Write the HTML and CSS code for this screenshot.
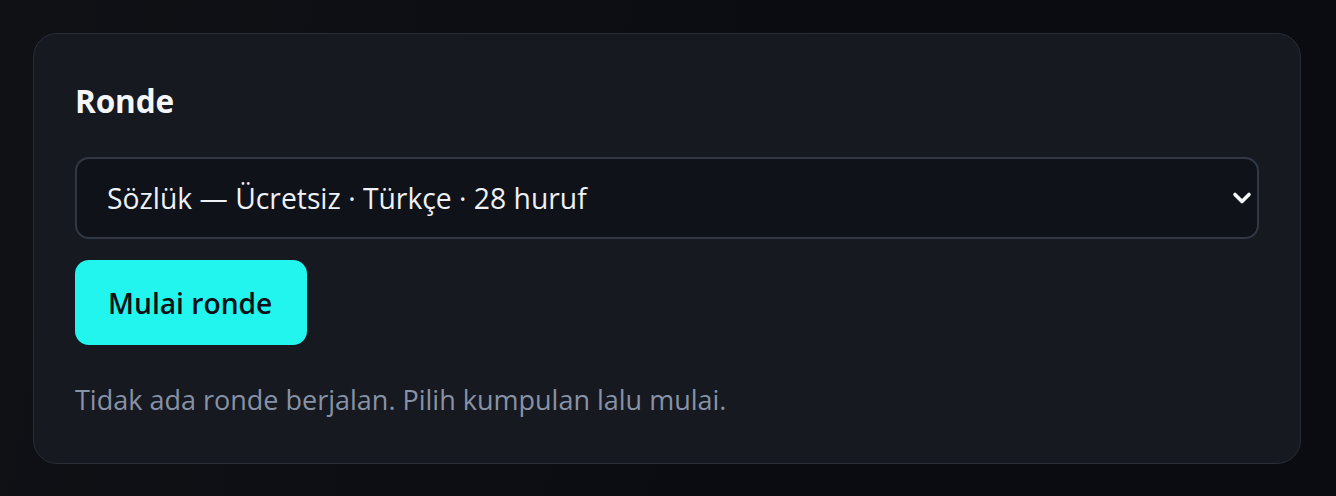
FILE: index.html
```html
<!DOCTYPE html>
<html lang="id">
<head>
<meta charset="utf-8">
<title>Ronde</title>
<link rel="stylesheet" href="styles.css">
</head>
<body>
<main class="page">
  <section class="card">
    <h2 class="card-title">Ronde</h2>
    <div class="select-wrap">
      <select class="select">
        <option>Sözlük — Ücretsiz · Türkçe · 28 huruf</option>
      </select>
      <svg class="chevron" width="20" height="14" viewBox="0 0 20 14" aria-hidden="true">
        <polyline points="3,3.5 10,10.5 17,3.5" fill="none" stroke="#f4f6fa" stroke-width="3.6" stroke-linecap="round" stroke-linejoin="round"/>
      </svg>
    </div>
    <div class="actions">
      <button class="btn-primary" type="button">Mulai ronde</button>
    </div>
    <p class="status">Tidak ada ronde berjalan. Pilih kumpulan lalu mulai.</p>
  </section>
</main>
</body>
</html>
```
FILE: styles.css
```css
* { box-sizing: border-box; }

html, body {
  margin: 0;
  height: 100%;
}

body {
  background: linear-gradient(100deg, #0f1115 0%, #0b0c11 60%, #0b0c12 100%);
  font-family: "Open Sans", "Noto Sans", sans-serif;
  color: #eef1f5;
}

.page {
  padding: 33px 35px 33px 33px;
}

.card {
  background: #161920;
  border: 1px solid #282d37;
  border-radius: 24px;
  padding: 48px 41px 45px 41px;
  display: flex;
  flex-direction: column;
}

.card-title {
  margin: 0;
  font-size: 31.5px;
  line-height: 38px;
  font-weight: 700;
  color: #f4f6fa;
  letter-spacing: -0.1px;
}

.select-wrap {
  position: relative;
  margin-top: 37px;
}

.select {
  appearance: none;
  -webkit-appearance: none;
  width: 100%;
  height: 82px;
  margin: 0;
  padding: 0 60px 0 30px;
  background: #0f1218;
  border: 2px solid #313845;
  border-radius: 14px;
  color: #eef1f5;
  font-family: "Open Sans", "Noto Sans", sans-serif;
  font-size: 28.3px;
  font-weight: 400;
  outline: none;
}

.chevron {
  position: absolute;
  right: 7px;
  top: 50%;
  transform: translateY(-50%);
  pointer-events: none;
}

.actions {
  display: flex;
  margin-top: 21px;
}

.btn-primary {
  height: 85px;
  padding: 0 35px 0 33px;
  border: 0;
  border-radius: 14px;
  background: #22f5ee;
  color: #0c1118;
  font-family: "Open Sans", "Noto Sans", sans-serif;
  font-size: 28.2px;
  font-weight: 600;
  cursor: pointer;
}

.status {
  margin: 37px 0 0 0;
  font-size: 27px;
  line-height: 36px;
  color: #8892a6;
}
```
